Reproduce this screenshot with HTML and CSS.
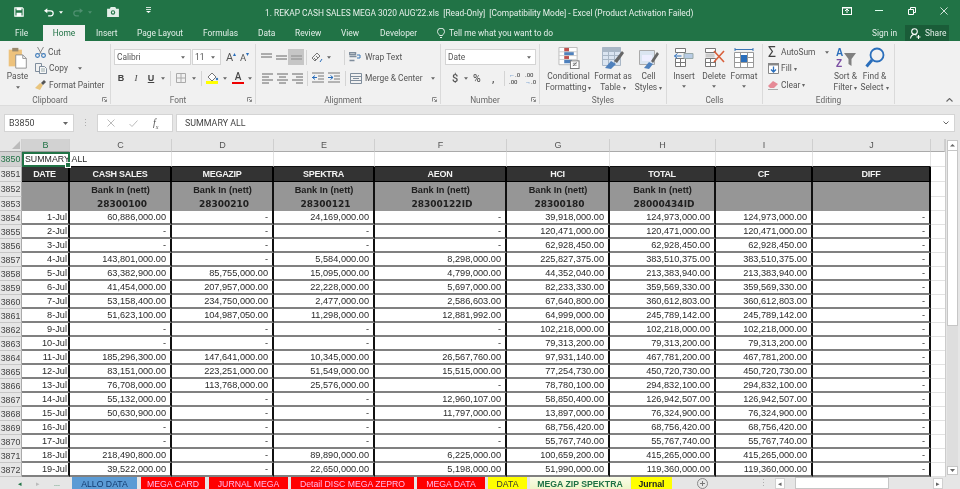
FILE: index.html
```html
<!DOCTYPE html>
<html lang="en">
<head>
<meta charset="utf-8">
<title>Excel</title>
<link rel="stylesheet" href="styles.css">
</head>
<body>
<svg class="defs" width="0" height="0">
  <symbol id="al-left" viewBox="0 0 13 12"><path d="M1 2h11M1 5h7M1 8h11M1 11h7" stroke="#666" fill="none"/></symbol>
  <symbol id="al-center" viewBox="0 0 13 12"><path d="M1 2h11M3 5h7M1 8h11M3 11h7" stroke="#666" fill="none"/></symbol>
  <symbol id="al-right" viewBox="0 0 13 12"><path d="M1 2h11M5 5h7M1 8h11M5 11h7" stroke="#666" fill="none"/></symbol>
  <symbol id="in-dec" viewBox="0 0 12 12"><path d="M0 1h12M6 4h6M6 7h6M0 10h12" stroke="#777" fill="none"/><path d="M0 5.500h5M3 3.500l-2.500 2 2.500 2" stroke="#2a6ebb" fill="none"/></symbol>
  <symbol id="in-inc" viewBox="0 0 12 12"><path d="M0 1h12M6 4h6M6 7h6M0 10h12" stroke="#777" fill="none"/><path d="M0 5.500h5M2.500 3.500l2.500 2-2.500 2" stroke="#2a6ebb" fill="none"/></symbol>
  <symbol id="arrow" viewBox="0 0 5 3"><path d="M0 0h5L2.500 3z" fill="#666"/></symbol>
</svg>
<div class="app">
  <header class="titlebar">
    <div class="qat">
      <svg class="q-save" width="10" height="10" viewBox="0 0 12 12"><path d="M1 1h9l1 1v9H1z" fill="none" stroke="#fff" stroke-width="1.400"/><path d="M3 1h6v3H3zM3 7h6v4H3z" fill="#fff"/></svg>
      <svg class="q-undo" width="10" height="9" viewBox="0 0 12 10"><path d="M3 3h5a3 3 0 0 1 0 6H5" fill="none" stroke="#fff" stroke-width="1.500"/><path d="M0 3l4-3v6z" fill="#fff"/></svg>
      <svg class="q-arrow" width="4" height="3" viewBox="0 0 5 3"><path d="M0 0h5L2.500 3z" fill="#fff"/></svg>
      <svg class="q-redo" width="10" height="9" viewBox="0 0 12 10"><path d="M9 3H4a3 3 0 0 0 0 6h3" fill="none" stroke="#4f9070" stroke-width="1.500"/><path d="M12 3L8 0v6z" fill="#4f9070"/></svg>
      <svg class="q-arrow2" width="4" height="3" viewBox="0 0 5 3"><path d="M0 0h5L2.500 3z" fill="#4f9070"/></svg>
      <svg class="q-camera" width="12" height="10" viewBox="0 0 13 11"><path d="M0 2h3l1-2h5l1 2h3v9H0z" fill="#e4efe9"/><circle cx="6.500" cy="6" r="2.400" fill="#217346"/><circle cx="6.500" cy="6" r="1.200" fill="#e4efe9"/></svg>
      <svg class="q-more" width="5" height="6" viewBox="0 0 5 6"><path d="M0 .5h5M0 2.500h5" stroke="#fff" stroke-width=".8"/><path d="M0 4h5L2.500 6z" fill="#fff"/></svg>
    </div>
    <div class="doc-title">1. REKAP CASH SALES MEGA 3020 AUG'22.xls&nbsp; [Read-Only]&nbsp; [Compatibility Mode] - Excel (Product Activation Failed)</div>
    <div class="win-btns">
      <svg class="w-opt" width="10" height="8" viewBox="0 0 10 8"><rect x=".5" y=".5" width="9" height="7" fill="none" stroke="#fff"/><path d="M5 6V2M3 4l2-2 2 2M0 1h10" stroke="#fff" fill="none"/></svg>
      <svg class="w-min" width="8" height="1"><rect width="8" height="1" fill="#dfe"/></svg>
      <svg class="w-max" width="8" height="8" viewBox="0 0 8 8"><path d="M.5 2.500h5v5h-5zM2.500 2V.5h5v5H6" fill="none" stroke="#fff"/></svg>
      <svg class="w-close" width="8" height="8" viewBox="0 0 9 9"><path d="M.5.5l8 8M8.500.5l-8 8" stroke="#e8f2ec"/></svg>
    </div>
  </header>

  <nav class="tabs">
    <span class="tab t-file">File</span>
    <span class="tab t-home">Home</span>
    <span class="tab t-insert">Insert</span>
    <span class="tab t-page">Page Layout</span>
    <span class="tab t-formulas">Formulas</span>
    <span class="tab t-data">Data</span>
    <span class="tab t-review">Review</span>
    <span class="tab t-view">View</span>
    <span class="tab t-dev">Developer</span>
    <svg class="bulb" width="8" height="11" viewBox="0 0 8 11"><path d="M2.500 7.500C2 6 .5 5.500.5 3.500a3.500 3.300 0 0 1 7 0C7.500 5.500 6 6 5.500 7.500zM3 9.500h2" fill="none" stroke="#e4efe9"/></svg>
    <span class="tab t-tell">Tell me what you want to do</span>
    <span class="tab t-sign">Sign in</span>
    <span class="share">
      <svg width="11" height="11" viewBox="0 0 11 11"><circle cx="4.500" cy="3.500" r="2.800" fill="none" stroke="#fff" stroke-width="1.100"/><path d="M.5 10.500c.5-3 2-4 4-4 1 0 1.500.2 2 .5M8.500 7v4M6.500 9h4" fill="none" stroke="#fff" stroke-width="1.100"/></svg>
      Share
    </span>
  </nav>

  <section class="ribbon">
    <div class="group g-clip">
      <div class="body clip-body">
        <div class="paste">
          <svg width="21" height="22" viewBox="0 0 22 25"><path d="M1 3h15v19H1z" fill="#edc27c"/><path d="M5 1h7v4H5z" fill="#9b8a6e"/><path d="M9 9h8l4 4v11H9z" fill="#fff" stroke="#8b8b8b"/><path d="M17 9v4h4" fill="none" stroke="#8b8b8b"/></svg>
          <span class="paste-label">Paste</span>
          <svg class="paste-arrow" width="4" height="3"><use href="#arrow"/></svg>
        </div>
        <div class="clip-list">
          <div class="clip-row r-cut">
            <svg width="11" height="11" viewBox="0 0 11 11"><path d="M2.500 0l4 7M8.500 0l-4 7" stroke="#8a8a8a" fill="none"/><circle cx="2.500" cy="8.500" r="1.900" fill="none" stroke="#3b79b8" stroke-width="1.100"/><circle cx="8.500" cy="8.500" r="1.900" fill="none" stroke="#3b79b8" stroke-width="1.100"/></svg>
            <span>Cut</span>
          </div>
          <div class="clip-row r-copy">
            <svg width="12" height="11" viewBox="0 0 12 11"><path d="M.5.5h6v8h-6z" fill="#f1f1f1" stroke="#7f8d9c"/><path d="M4.500 3.500h5l2 2v5h-7z" fill="#f7f7f7" stroke="#7f8d9c"/><path d="M6 6h4M6 8h4" stroke="#9aa"/></svg>
            <span>Copy</span>
            <svg class="caret" width="4" height="3"><use href="#arrow"/></svg>
          </div>
          <div class="clip-row r-painter">
            <svg width="12" height="11" viewBox="0 0 12 11"><path d="M0 9l5-5 3 2-3 5z" fill="#e9c57e"/><path d="M6 4l3-3 2 2-3 3z" fill="#555"/></svg>
            <span>Format Painter</span>
          </div>
        </div>
      </div>
      <div class="label lab-pad">Clipboard</div>
      <svg class="launcher" width="5" height="5"><path d="M.5 4.500V.5h4M2 2l2.500 2.500M4.500 2.500v2h-2" fill="none" stroke="#888"/></svg>
    </div>

    <div class="group g-font">
      <div class="body">
        <div class="line l1">
          <div class="select s-font"><span>Calibri</span><svg width="4" height="3"><use href="#arrow"/></svg></div>
          <div class="select s-size"><span>11</span><svg width="4" height="3"><use href="#arrow"/></svg></div>
          <span class="grow">A<sup class="up">▴</sup></span>
          <span class="shrink">A<sup class="dn">▾</sup></span>
        </div>
        <div class="line l2">
          <b class="fmt f-b">B</b>
          <i class="fmt f-i">I</i>
          <span class="fmt f-u">U</span>
          <svg class="c1" width="4" height="3"><use href="#arrow"/></svg>
          <span class="sep s1"></span>
          <svg class="borders" width="10" height="10" viewBox="0 0 10 10"><path d="M.5.5h9v9h-9zM5 .5v9M.5 5h9" fill="none" stroke="#aaa"/></svg>
          <svg class="c2" width="4" height="3"><use href="#arrow"/></svg>
          <span class="sep s2"></span>
          <svg class="fill" width="13" height="12" viewBox="0 0 13 12"><path d="M2 5l4-4 4 4-4 4z" fill="#fff" stroke="#777"/><circle cx="11" cy="7" r="1.200" fill="#3b79b8"/><rect y="9" width="12" height="3" fill="#ff0"/></svg>
          <svg class="c3" width="4" height="3"><use href="#arrow"/></svg>
          <span class="color-a">A</span>
          <svg class="c4" width="4" height="3"><use href="#arrow"/></svg>
        </div>
      </div>
      <div class="label lab-pad">Font</div>
      <svg class="launcher" width="5" height="5"><path d="M.5 4.500V.5h4M2 2l2.500 2.500M4.500 2.500v2h-2" fill="none" stroke="#888"/></svg>
    </div>

    <div class="group g-align">
      <div class="body">
        <div class="line a1">
          <svg width="11" height="8" viewBox="0 0 11 8"><path d="M0 1h11M0 4h11" stroke="#666"/></svg>
          <svg class="gap4" width="11" height="8" viewBox="0 0 11 8"><path d="M0 3h11M0 6h11" stroke="#666"/></svg>
          <span class="sel-mid"><svg width="11" height="5" viewBox="0 0 11 5"><path d="M0 1h11M0 4h11" stroke="#8a8a8a"/></svg></span>
          <span class="sep s3"></span>
          <svg class="orient" width="12" height="11" viewBox="0 0 12 11"><path d="M1 6l5-5 3 3-5 5zM3 6l2 2M5 4l2 2" fill="none" stroke="#777"/><path d="M9 10l2-3" stroke="#2a6ebb"/></svg>
          <svg class="c5" width="4" height="3"><use href="#arrow"/></svg>
          <span class="sep s4"></span>
          <svg class="wrap-ic" width="12" height="11" viewBox="0 0 12 11"><path d="M.5.5h6v2h-6zM.5 4.500h7M.5 8.500h5" fill="none" stroke="#7f8d9c" stroke-width="1.400"/><path d="M8 3h3v3H8" fill="none" stroke="#3b79b8"/></svg>
          <span class="wrap-text">Wrap Text</span>
        </div>
        <div class="line a2">
          <svg width="13" height="12"><use href="#al-left"/></svg>
          <svg class="gap2" width="13" height="12"><use href="#al-center"/></svg>
          <svg class="gap2" width="13" height="12"><use href="#al-right"/></svg>
          <span class="sep s5"></span>
          <svg class="ind1" width="12" height="12"><use href="#in-dec"/></svg>
          <svg class="ind2" width="12" height="12"><use href="#in-inc"/></svg>
          <span class="sep s6"></span>
          <svg class="merge-ic" width="12" height="11" viewBox="0 0 12 11"><path d="M.5.5h11v10H.5zM.5 3.500h11M.5 7.500h11M3 5.500h6" fill="none" stroke="#7f8d9c"/></svg>
          <span class="wrap-text">Merge &amp; Center</span>
          <svg class="c6" width="4" height="3"><use href="#arrow"/></svg>
        </div>
      </div>
      <div class="label lab-pad">Alignment</div>
      <svg class="launcher" width="5" height="5"><path d="M.5 4.500V.5h4M2 2l2.500 2.500M4.500 2.500v2h-2" fill="none" stroke="#888"/></svg>
    </div>

    <div class="group g-num">
      <div class="body">
        <div class="line n1"><div class="select s-num"><span>Date</span><svg width="4" height="3"><use href="#arrow"/></svg></div></div>
        <div class="line n2">
          <span class="sym dollar">$</span>
          <svg class="c7" width="4" height="3"><use href="#arrow"/></svg>
          <span class="sym pct">%</span>
          <span class="sym comma">,</span>
          <span class="sep s7"></span>
          <span class="dec dec1"><em>←</em>.0<br>.00</span>
          <span class="dec dec2">.00<br><em>→</em>.0</span>
        </div>
      </div>
      <div class="label lab-pad">Number</div>
      <svg class="launcher" width="5" height="5"><path d="M.5 4.500V.5h4M2 2l2.500 2.500M4.500 2.500v2h-2" fill="none" stroke="#888"/></svg>
    </div>

    <div class="group g-styles">
      <div class="body big-row">
        <div class="big b-cf">
          <svg width="22" height="22" viewBox="0 0 22 23"><path d="M.5.5h19v18H.5z" fill="#fff" stroke="#bbb"/><path d="M6 1h5v4H6z" fill="#c0504d"/><path d="M6 5h10v4H6z" fill="#4f81bd"/><path d="M6 9h5v4H6z" fill="#c0504d"/><path d="M6 13h8v4H6z" fill="#4f81bd"/><path d="M.5 5h19M.5 9h19M.5 13h19" stroke="#ccc"/><rect x="12.500" y="14.500" width="9" height="8" fill="#fff" stroke="#777"/><path d="M15 20l4-4M15 17h4M15 19h4" stroke="#555" stroke-width=".7"/></svg>
          <span>Conditional</span><span>Formatting <i class="mini">▾</i></span>
        </div>
        <div class="big b-ft">
          <svg width="22" height="22" viewBox="0 0 22 22"><path d="M.5.5h18v18H.5z" fill="#dbe5f1" stroke="#a9b7c6"/><path d="M.5 4.500h18M.5 8.500h18M.5 12.500h18M6.500.5v18M12.500.5v18" stroke="#a9b7c6" fill="none"/><path d="M.5.5h18v4H.5z" fill="#a9b7c6"/><path d="M3 21l6-7 5 3-5 5z" fill="#4f81bd"/><path d="M12 14l8-10 2 2-7 10z" fill="#666"/></svg>
          <span>Format as</span><span>Table <i class="mini">▾</i></span>
        </div>
        <div class="big b-cs">
          <svg width="20" height="22" viewBox="0 0 20 22"><path d="M.5 3.500h15v14H.5z" fill="#dbe5f1" stroke="#aaa"/><path d="M3 8h10v6H3z" fill="#eef"/><path d="M5 21l5-6 4 2-4 5z" fill="#4f81bd"/><path d="M12 14l6-9 2 2-6 9z" fill="#666"/></svg>
          <span>Cell</span><span>Styles <i class="mini">▾</i></span>
        </div>
      </div>
      <div class="label">Styles</div>
    </div>

    <div class="group g-cells">
      <div class="body big-row">
        <div class="big b-cell">
          <svg width="20" height="20" viewBox="0 0 20 20"><path d="M1.500.5h10v4h-10zM1.500 10.500h10v8h-10zM6.500 10.500v8M1.500 14.500h10" fill="#fff" stroke="#777"/><path d="M10 5.500h9v5h-9z" fill="#b8cce4" stroke="#9aa"/><path d="M.5 8h7M.5 8l3-2.500M.5 8l3 2.500" stroke="#2a6ebb" fill="none"/></svg>
          <span>Insert</span><svg class="big-caret" width="4" height="3"><use href="#arrow"/></svg>
        </div>
        <div class="big b-cell">
          <svg width="21" height="20" viewBox="0 0 21 20"><path d="M1.500.5h10v4h-10zM1.500 10.500h10v8h-10zM6.500 10.500v8M1.500 14.500h10" fill="#fff" stroke="#777"/><path d="M1.500 5.500h9v4h-9z" fill="#ccc"/><path d="M10 3l10 11M20 3L10 14" stroke="#d9603b" stroke-width="1.600"/></svg>
          <span>Delete</span><svg class="big-caret" width="4" height="3"><use href="#arrow"/></svg>
        </div>
        <div class="big b-cell">
          <svg width="20" height="20" viewBox="0 0 20 20"><path d="M.5 4.500h19v15H.5zM6.500 4.500v15M13.500 4.500v15M.5 9.500h19M.5 14.500h19" fill="#fff" stroke="#999"/><rect x="7" y="7" width="6" height="7" fill="#2a6ebb"/><path d="M1 1.500h18M1 0v3M19 0v3" stroke="#3a74b4"/></svg>
          <span>Format</span><svg class="big-caret" width="4" height="3"><use href="#arrow"/></svg>
        </div>
      </div>
      <div class="label">Cells</div>
    </div>

    <div class="group g-edit">
      <div class="body big-row">
        <div class="edit-list">
          <div class="clip-row e-sum"><span class="sigma">Σ</span><span>AutoSum</span><svg class="caret-sum" width="4" height="3"><use href="#arrow"/></svg></div>
          <div class="clip-row e-fill"><svg width="11" height="11" viewBox="0 0 11 11"><path d="M.5.5h10v10H.5z" fill="#fff" stroke="#888"/><path d="M0 0h11v2.500H0z" fill="#888"/><path d="M5.500 3.500v5M3 6.500l2.500 2.500L8 6.500" stroke="#2a6ebb" fill="none" stroke-width="1.300"/></svg><span>Fill</span><i class="mini">▾</i></div>
          <div class="clip-row e-clear"><svg width="11" height="10" viewBox="0 0 11 10"><path d="M0 6l5-5 5 3-4 4H2z" fill="#e68a96"/><path d="M0 9.500h10" stroke="#aaa"/></svg><span>Clear</span><i class="mini">▾</i></div>
        </div>
        <div class="big b-sort">
          <svg width="22" height="22" viewBox="0 0 22 22"><text x="1" y="9" class="az-a">A</text><text x="1" y="20" class="az-z">Z</text><path d="M9 6h12l-4.500 6v7l-3-2v-5z" fill="#808080"/></svg>
          <span>Sort &amp;</span><span>Filter <i class="mini">▾</i></span>
        </div>
        <div class="big b-find">
          <svg width="20" height="22" viewBox="0 0 20 22"><circle cx="12" cy="8" r="6.500" fill="none" stroke="#2a6ebb" stroke-width="1.800"/><path d="M7 13l-5.500 6.500" stroke="#2a6ebb" stroke-width="3"/></svg>
          <span>Find &amp;</span><span>Select <i class="mini">▾</i></span>
        </div>
      </div>
      <div class="label">Editing</div>
    </div>

    <div class="collapse">
      <svg width="7" height="4" viewBox="0 0 7 4"><path d="M.5 3.500l3-3 3 3" fill="none" stroke="#666" stroke-width="1.100"/></svg>
    </div>
  </section>

  <section class="formula">
    <div class="namebox"><span>B3850</span><svg width="5" height="3"><use href="#arrow"/></svg></div>
    <span class="dots">⋮</span>
    <div class="fx-box">
      <svg width="8" height="8" viewBox="0 0 8 8"><path d="M.5.5l7 7M7.500.5l-7 7" stroke="#bbb"/></svg>
      <svg class="fx-ok" width="9" height="7" viewBox="0 0 9 7"><path d="M.5 4l2.500 2.500L8.500.5" stroke="#bbb" fill="none"/></svg>
      <i class="fx">f<sub>x</sub></i>
    </div>
    <div class="input"><span>SUMMARY ALL</span><svg width="6" height="4" viewBox="0 0 6 4"><path d="M.5.5l2.500 2.500L5.500.5" fill="none" stroke="#666"/></svg></div>
  </section>

  <main class="sheet">
    <div class="grid-wrap">
      <table class="grid">
        <colgroup>
          <col class="c-rh"><col class="c-b"><col class="c-c"><col class="c-d"><col class="c-e"><col class="c-f"><col class="c-g"><col class="c-h"><col class="c-i"><col class="c-j"><col class="c-k">
        </colgroup>
        <thead>
          <tr class="ch">
            <th class="corner"><svg width="8" height="8" viewBox="0 0 8 8"><path d="M8 0v8H0z" fill="#bbb"/></svg></th>
            <th class="ch-sel">B</th><th>C</th><th>D</th><th>E</th><th>F</th><th>G</th><th>H</th><th>I</th><th>J</th><th></th>
          </tr>
        </thead>
        <tbody>
          <tr class="title-row"><th class="rh-sel">3850</th><td class="active"><span>SUMMARY ALL</span></td><td></td><td></td><td></td><td></td><td></td><td></td><td></td><td></td><td></td></tr>
          <tr class="dark"><th>3851</th><td>DATE</td><td>CASH SALES</td><td>MEGAZIP</td><td>SPEKTRA</td><td>AEON</td><td>HCI</td><td>TOTAL</td><td>CF</td><td>DIFF</td><td class="k"></td></tr>
          <tr class="gray g-bank"><th>3852</th><td></td><td>Bank In (nett)</td><td>Bank In (nett)</td><td>Bank In (nett)</td><td>Bank In (nett)</td><td>Bank In (nett)</td><td>Bank In (nett)</td><td></td><td></td><td class="k"></td></tr>
          <tr class="gray g-code"><th>3853</th><td></td><td>28300100</td><td>28300210</td><td>28300121</td><td>28300122ID</td><td>28300180</td><td>28000434ID</td><td></td><td></td><td class="k"></td></tr>
          <tr><th>3854</th><td>1-Jul</td><td>60,886,000.00</td><td>-</td><td>24,169,000.00</td><td>-</td><td>39,918,000.00</td><td>124,973,000.00</td><td>124,973,000.00</td><td>-</td><td class="k"></td></tr>
          <tr><th>3855</th><td>2-Jul</td><td>-</td><td>-</td><td>-</td><td>-</td><td>120,471,000.00</td><td>120,471,000.00</td><td>120,471,000.00</td><td>-</td><td class="k"></td></tr>
          <tr><th>3856</th><td>3-Jul</td><td>-</td><td>-</td><td>-</td><td>-</td><td>62,928,450.00</td><td>62,928,450.00</td><td>62,928,450.00</td><td>-</td><td class="k"></td></tr>
          <tr><th>3857</th><td>4-Jul</td><td>143,801,000.00</td><td>-</td><td>5,584,000.00</td><td>8,298,000.00</td><td>225,827,375.00</td><td>383,510,375.00</td><td>383,510,375.00</td><td>-</td><td class="k"></td></tr>
          <tr><th>3858</th><td>5-Jul</td><td>63,382,900.00</td><td>85,755,000.00</td><td>15,095,000.00</td><td>4,799,000.00</td><td>44,352,040.00</td><td>213,383,940.00</td><td>213,383,940.00</td><td>-</td><td class="k"></td></tr>
          <tr><th>3859</th><td>6-Jul</td><td>41,454,000.00</td><td>207,957,000.00</td><td>22,228,000.00</td><td>5,697,000.00</td><td>82,233,330.00</td><td>359,569,330.00</td><td>359,569,330.00</td><td>-</td><td class="k"></td></tr>
          <tr><th>3860</th><td>7-Jul</td><td>53,158,400.00</td><td>234,750,000.00</td><td>2,477,000.00</td><td>2,586,603.00</td><td>67,640,800.00</td><td>360,612,803.00</td><td>360,612,803.00</td><td>-</td><td class="k"></td></tr>
          <tr><th>3861</th><td>8-Jul</td><td>51,623,100.00</td><td>104,987,050.00</td><td>11,298,000.00</td><td>12,881,992.00</td><td>64,999,000.00</td><td>245,789,142.00</td><td>245,789,142.00</td><td>-</td><td class="k"></td></tr>
          <tr><th>3862</th><td>9-Jul</td><td>-</td><td>-</td><td>-</td><td>-</td><td>102,218,000.00</td><td>102,218,000.00</td><td>102,218,000.00</td><td>-</td><td class="k"></td></tr>
          <tr><th>3863</th><td>10-Jul</td><td>-</td><td>-</td><td>-</td><td>-</td><td>79,313,200.00</td><td>79,313,200.00</td><td>79,313,200.00</td><td>-</td><td class="k"></td></tr>
          <tr><th>3864</th><td>11-Jul</td><td>185,296,300.00</td><td>147,641,000.00</td><td>10,345,000.00</td><td>26,567,760.00</td><td>97,931,140.00</td><td>467,781,200.00</td><td>467,781,200.00</td><td>-</td><td class="k"></td></tr>
          <tr><th>3865</th><td>12-Jul</td><td>83,151,000.00</td><td>223,251,000.00</td><td>51,549,000.00</td><td>15,515,000.00</td><td>77,254,730.00</td><td>450,720,730.00</td><td>450,720,730.00</td><td>-</td><td class="k"></td></tr>
          <tr><th>3866</th><td>13-Jul</td><td>76,708,000.00</td><td>113,768,000.00</td><td>25,576,000.00</td><td>-</td><td>78,780,100.00</td><td>294,832,100.00</td><td>294,832,100.00</td><td>-</td><td class="k"></td></tr>
          <tr><th>3867</th><td>14-Jul</td><td>55,132,000.00</td><td>-</td><td>-</td><td>12,960,107.00</td><td>58,850,400.00</td><td>126,942,507.00</td><td>126,942,507.00</td><td>-</td><td class="k"></td></tr>
          <tr><th>3868</th><td>15-Jul</td><td>50,630,900.00</td><td>-</td><td>-</td><td>11,797,000.00</td><td>13,897,000.00</td><td>76,324,900.00</td><td>76,324,900.00</td><td>-</td><td class="k"></td></tr>
          <tr><th>3869</th><td>16-Jul</td><td>-</td><td>-</td><td>-</td><td>-</td><td>68,756,420.00</td><td>68,756,420.00</td><td>68,756,420.00</td><td>-</td><td class="k"></td></tr>
          <tr><th>3870</th><td>17-Jul</td><td>-</td><td>-</td><td>-</td><td>-</td><td>55,767,740.00</td><td>55,767,740.00</td><td>55,767,740.00</td><td>-</td><td class="k"></td></tr>
          <tr><th>3871</th><td>18-Jul</td><td>218,490,800.00</td><td>-</td><td>89,890,000.00</td><td>6,225,000.00</td><td>100,659,200.00</td><td>415,265,000.00</td><td>415,265,000.00</td><td>-</td><td class="k"></td></tr>
          <tr><th>3872</th><td>19-Jul</td><td>39,522,000.00</td><td>-</td><td>22,650,000.00</td><td>5,198,000.00</td><td>51,990,000.00</td><td>119,360,000.00</td><td>119,360,000.00</td><td>-</td><td class="k"></td></tr>
        </tbody>
      </table>
    </div>
    <div class="vscroll">
      <svg class="vbtn" width="11" height="11" viewBox="0 0 11 11"><rect x=".5" y=".5" width="10" height="10" fill="#fff" stroke="#c6c6c6"/><path d="M3 6.500h5L5.500 4z" fill="#666"/></svg>
      <span class="vthumb"></span>
      <span class="vspace"></span>
      <svg class="vbtn" width="11" height="9" viewBox="0 0 11 9"><rect x=".5" y=".5" width="10" height="8" fill="#fff" stroke="#c6c6c6"/><path d="M3 3h5L5.500 6z" fill="#666"/></svg>
    </div>
  </main>

  <footer class="sheetbar">
    <div class="nav"><span class="nav-on">◂</span><span class="nav-off">▸</span><span class="nav-on">...</span></div>
    <span class="stab blue">ALLO DATA</span>
    <span class="stab red w-card">MEGA CARD</span>
    <span class="stab red w-jm">JURNAL MEGA</span>
    <span class="stab red w-disc">Detail DISC MEGA ZEPRO</span>
    <span class="stab red w-md">MEGA DATA</span>
    <span class="stab yellow w-data">DATA</span>
    <span class="stab current">MEGA ZIP SPEKTRA</span>
    <span class="stab yellow strong">Jurnal</span>
    <span class="add"><svg width="11" height="11" viewBox="0 0 11 11"><circle cx="5.500" cy="5.500" r="5" fill="none" stroke="#888"/><path d="M5.500 3v5M3 5.500h5" stroke="#777"/></svg></span>
    <span class="bar-dots">⋮</span>
    <div class="hscroll"><span class="hbtn">◂</span><span class="hthumb"></span><span class="hbtn end">▸</span></div>
  </footer>
</div>
</body>
</html>
```
FILE: styles.css
```css
* { box-sizing: border-box; }
html, body { margin: 0; padding: 0; }
body { width: 960px; height: 489px; overflow: hidden; font-family: Roboto, "Liberation Sans", sans-serif; color: #444; background: #e6e6e6; }
.defs { display: block; width: 0; height: 0; }
.app { width: 960px; height: 489px; display: flex; flex-direction: column; overflow: hidden; filter: blur(.3px); }
svg { flex: none; display: block; }

/* title bar */
.titlebar { height: 25px; background: #217346; display: flex; align-items: center; color: #e6f0ea; flex: none; }
.qat { width: 265px; display: flex; align-items: center; flex: none; margin-top: -1px; }
.q-save { margin-left: 14px; }
.q-undo { margin-left: 20px; }
.q-arrow { margin-left: 5px; }
.q-redo { margin-left: 10px; }
.q-arrow2 { margin-left: 5px; }
.q-camera { margin-left: 15px; }
.q-more { margin-left: 27px; margin-top: -4px; }
.doc-title { font-size: 8.400px; white-space: nowrap; width: 428px; flex: none; }
.win-btns { display: flex; align-items: center; margin-left: 149px; margin-top: -4px; }
.w-min { margin-left: 23px; }
.w-max { margin-left: 25px; }
.w-close { margin-left: 24px; }

/* tabs */
.tabs { height: 16px; background: #217346; display: flex; align-items: center; font-size: 8.400px; color: #e2eee8; flex: none; }
.tab { white-space: nowrap; line-height: 16px; display: block; }
.t-file { margin-left: 15px; width: 28px; }
.t-home { width: 42px; height: 16px; background: #f1f1f1; color: #217346; text-align: center; }
.t-insert { margin-left: 11px; width: 41px; }
.t-page { width: 66px; }
.t-formulas { width: 55px; }
.t-data { width: 37px; }
.t-review { width: 46px; }
.t-view { width: 39px; }
.t-dev { width: 57px; }
.bulb { margin-right: 4px; }
.t-tell { width: 423px; }
.t-sign { width: 33px; }
.share { width: 44px; height: 16px; background: #1a5c38; display: flex; align-items: center; gap: 4px; padding-left: 5px; color: #e2eee8; }

/* ribbon */
.ribbon { height: 65px; background: #f1f1f1; display: flex; flex: none; font-size: 8.400px; color: #555; border-bottom: 1px solid #dcdcdc; }
.group { display: flex; flex-direction: column; flex: none; height: 60px; margin-top: 3px; border-right: 1px solid #dadada; position: relative; }
.body { height: 51px; flex: none; }
.label { height: 10px; line-height: 10px; text-align: center; font-size: 8.300px; color: #666; flex: none; }
.lab-pad { padding-right: 10px; }
.launcher { position: absolute; right: 3px; bottom: 2px; }
.g-clip { width: 111px; }
.g-font { width: 145px; }
.g-align { width: 185px; }
.g-num { width: 99px; }
.g-styles { width: 127px; }
.g-cells { width: 96px; }
.g-edit { width: 132px; }
.clip-body { display: flex; }
.paste { width: 35px; display: flex; flex-direction: column; align-items: center; padding-top: 3px; }
.paste-label { margin-top: 2px; line-height: 11px; }
.paste-arrow { margin-top: 4px; }
.clip-list { display: flex; flex-direction: column; margin-top: -1px; padding-top: 1px; }
.clip-row { display: flex; align-items: center; height: 16.300px; gap: 2px; white-space: nowrap; }
.caret { margin-left: 8px; }
.line { display: flex; align-items: center; height: 16px; }
.l1 { margin-top: 5px; padding-left: 3px; }
.l2 { margin-top: 5px; }
.select { background: #fff; border: 1px solid #d4d4d4; height: 16px; display: flex; align-items: center; justify-content: space-between; padding: 0 5px 0 2px; font-size: 8.400px; }
.s-font { width: 77px; }
.s-size { width: 29px; margin-left: 1px; }
.s-num { width: 91px; padding-right: 4px; }
.grow { margin-left: 5px; font-size: 11px; width: 13px; }
.shrink { font-size: 9.500px; width: 11px; margin-left: 1px; }
.up, .dn { font-size: 6px; color: #2a6ebb; vertical-align: 5px; line-height: 0; }
.fmt { font-size: 9px; text-align: center; width: 10px; font-family: "Liberation Serif", serif; color: #444; }
.f-b { margin-left: 5px; font-family: "Liberation Sans", sans-serif; }
.f-i { margin-left: 5px; }
.f-u { margin-left: 5px; text-decoration: underline; font-weight: 700; font-family: "Liberation Sans", sans-serif; }
.c1 { margin-left: 5px; }
.sep { width: 1px; height: 15px; background: #d4d4d4; flex: none; display: block; }
.s1 { margin-left: 5px; }
.borders { margin-left: 5px; }
.c2 { margin-left: 6px; }
.s2 { margin-left: 5px; }
.fill { margin-left: 4px; }
.c3 { margin-left: 4px; }
.color-a { margin-left: 5px; width: 12px; font-size: 10px; font-weight: 500; text-align: center; line-height: 10px; color: #444; border-bottom: 2px solid #e00; height: 12px; }
.c4 { margin-left: 4px; }
.a1 { margin-top: 5px; padding-left: 5px; }
.gap4 { margin-left: 4px; }
.sel-mid { width: 16px; height: 16px; background: #c6c6c6; display: flex; align-items: center; justify-content: center; margin-left: 1px; }
.s3 { margin-left: 2px; }
.orient { margin-left: 4px; }
.c5 { margin-left: 4px; }
.s4 { margin-left: 13px; }
.wrap-ic, .merge-ic { margin-left: 4px; }
.wrap-text { margin-left: 3px; white-space: nowrap; }
.a1 .wrap-text { margin-left: 4px; }
.a2 { margin-top: 5px; padding-left: 5px; }
.gap2 { margin-left: 2px; }
.s5 { margin-left: 3px; }
.ind1 { margin-left: 4px; }
.ind2 { margin-left: 4px; }
.s6 { margin-left: 5px; }
.c6 { margin-left: 8px; }
.n1 { margin-top: 5px; padding-left: 4px; }
.n2 { margin-top: 5px; }
.sym { font-size: 11px; font-weight: 500; color: #555; }
.dollar { margin-left: 11px; width: 8px; }
.c7 { margin-left: 4px; }
.pct { margin-left: 5px; width: 12px; font-size: 10.500px; }
.comma { margin-left: 7px; width: 5px; }
.s7 { margin-left: 7px; }
.dec { font-size: 6px; line-height: 7px; font-weight: 500; color: #555; width: 14px; display: block; white-space: nowrap; }
.dec em { font-style: normal; color: #2a6ebb; }
.dec1 { margin-left: 4px; }
.dec2 { margin-left: 2px; }
.big-row { display: flex; }
.big { display: flex; flex-direction: column; align-items: center; line-height: 11px; white-space: nowrap; padding-top: 3px; flex: none; }
.big svg:first-child { height: 22px; margin-bottom: 2px; }
.mini { font-style: normal; font-size: 6px; color: #666; }
.b-cf { width: 55px; margin-left: 1px; }
.b-ft { width: 34px; }
.b-cs { width: 37px; }
.b-cell { width: 30px; }
.g-cells .big-row { padding-left: 2px; }
.big-caret { margin-top: 3px; }
.edit-list { display: flex; flex-direction: column; width: 68px; padding-left: 5px; margin-top: -1px; padding-top: 1px; flex: none; }
.sigma { font-size: 14px; line-height: 12px; color: #444; width: 11px; }
.caret-sum { margin-left: 8px; }
.b-sort { width: 29px; }
.b-find { width: 29px; }
.az-a { font: 700 10px "Liberation Sans", sans-serif; fill: #2a6ebb; }
.az-z { font: 700 10px "Liberation Sans", sans-serif; fill: #7b4ea3; }
.collapse { flex: 1; display: flex; justify-content: flex-end; align-items: flex-end; padding: 0 7px 3px 0; }

/* formula bar */
.formula { height: 33px; flex: none; background: #e6e6e6; display: flex; align-items: center; padding: 8px 4px 7px; }
.namebox { width: 70px; height: 18px; background: #fff; border: 1px solid #d4d4d4; display: flex; justify-content: space-between; align-items: center; padding: 0 5px 0 4px; font-size: 8.900px; flex: none; }
.dots { width: 23px; text-align: center; color: #aaa; font-size: 9px; flex: none; }
.fx-box { width: 76px; height: 18px; background: #fff; border: 1px solid #d4d4d4; display: flex; align-items: center; padding-left: 9px; flex: none; }
.fx-ok { margin-left: 14px; }
.fx { font-family: "Liberation Serif", serif; font-size: 10px; margin-left: 15px; color: #555; }
.fx sub { font-size: 6px; }
.input { margin-left: 3px; width: 779px; height: 18px; background: #fff; border: 1px solid #d4d4d4; display: flex; align-items: center; justify-content: space-between; padding: 0 5px 0 8px; font-size: 8.900px; flex: none; }

/* grid */
.sheet { height: 338px; flex: none; display: flex; background: #e6e6e6; overflow: hidden; }
.grid-wrap { width: 947px; flex: none; overflow: hidden; }
.grid { border-collapse: separate; border-spacing: 0; table-layout: fixed; width: 945px; font-family: "Liberation Sans", sans-serif; font-size: 9.200px; color: #2a2a2a; background: #fff; border-right: 1px solid #ccc; }
.c-rh { width: 22px; } .c-b { width: 48px; } .c-c { width: 102px; } .c-d { width: 102px; } .c-e { width: 101px; } .c-f { width: 132px; } .c-g { width: 103px; } .c-h { width: 106px; } .c-i { width: 97px; } .c-j { width: 118px; } .c-k { width: 14px; }
.grid th, .grid td { padding: 0; height: 14px; line-height: 12px; white-space: nowrap; font-weight: 400; overflow: visible; }
.grid .ch th { height: 13px; background: #e6e6e6; color: #555; border-right: 1px solid #cfcfcf; border-bottom: 1px solid #aaa; text-align: center; font-size: 9px; }
.grid .ch .corner { padding-left: 12px; }
.grid .ch .ch-sel { background: #d2d2d2; color: #217346; border-bottom: 1px solid #999; }
.grid tbody th { background: #e6e6e6; border-right: 1px solid #aaa; border-bottom: 1px solid #c6c6c6; color: #444; text-align: center; font-size: 8.900px; }
.grid tbody .rh-sel { color: #217346; background: #d2d2d2; }
.grid tbody td { text-align: right; padding-right: 4px; border-right: 2px solid #111; border-bottom: 2px solid #808080; }
.grid tbody td:nth-child(2) { padding-right: 1px; }
.grid tbody td.k { border-right: 0; border-bottom: 1px solid #e2e2e2; padding: 0; }
.grid .title-row th, .grid .title-row td { height: 15px; }
.grid .title-row td { border-right: 1px solid #e2e2e2; border-bottom: 1px solid #111; text-align: left; font-size: 8.800px; }
.grid .title-row td:last-child { border-right: 0; border-bottom: 1px solid #e2e2e2; }
.grid .title-row .active { position: relative; outline: 2px solid #217346; outline-offset: -2px; padding-left: 3px; padding-right: 0; }
.active::after { content: ""; position: absolute; right: -2px; bottom: -2px; width: 4px; height: 4px; background: #217346; border: 1px solid #fff; }
.grid .dark th, .grid .dark td { height: 15px; }
.grid .dark td { background: #333; color: #f2f2f2; font-weight: 700; font-size: 9px; letter-spacing: -.3px; text-align: center; padding-right: 0; border-right-color: #000; border-bottom: 1px solid #000; }
.grid .gray td { background: #969696; color: #202020; font-weight: 700; text-align: center; padding-right: 0; border-bottom: 0; }
.grid .g-bank th, .grid .g-bank td { height: 15px; }
.grid .g-bank td { font-size: 9.200px; padding-left: 1px; }
.grid .g-code td { font-family: "DejaVu Sans", sans-serif; font-size: 9px; padding-left: 4px; }
.grid .gray td.k, .grid .dark td.k { background: #fff; border-bottom: 1px solid #e2e2e2; padding: 0; }

.vscroll { width: 13px; flex: none; display: flex; flex-direction: column; padding: 1px 2px 2px 0; }
.vthumb { height: 175px; background: #fff; border: 1px solid #c6c6c6; border-top: 0; display: block; flex: none; }
.vspace { flex: 1; background: #dedede; display: block; }

/* sheet tabs */
.sheetbar { height: 12px; flex: none; display: flex; background: #e6e6e6; font-family: "Liberation Sans", sans-serif; font-size: 8.700px; white-space: nowrap; overflow: hidden; }
.nav { width: 72px; display: flex; font-size: 7px; line-height: 14px; padding-left: 18px; flex: none; color: #217346; }
.nav span { width: 20px; display: block; }
.nav-off { color: #bbb; }
.stab { display: block; height: 12px; line-height: 14px; text-align: center; flex: none; margin-right: 3px; }
.blue { width: 65px; background: #5b9bd5; color: #123a6e; margin-right: 4px; }
.red { background: #f00; color: #fbe; }
.w-card { width: 64px; margin-right: 4px; }
.w-jm { width: 79px; }
.w-disc { width: 123px; }
.w-md { width: 68px; }
.yellow { background: #ff0; color: #333; }
.w-data { width: 39px; }
.current { width: 100px; margin-right: 1px; background: linear-gradient(#fbfde8, #eef5c8); color: #1e7145; font-weight: 700; }
.strong { width: 41px; font-weight: 700; color: #222; margin-right: 0; }
.add { width: 58px; display: flex; justify-content: center; padding-left: 2px; align-items: center; flex: none; }
.bar-dots { width: 14px; margin-left: 26px; color: #aaa; text-align: center; font-size: 9px; line-height: 13px; flex: none; }
.hscroll { flex: 1; display: flex; align-items: center; font-size: 7px; color: #666; height: 12px; margin-left: 5px; }
.hbtn { width: 10px; height: 11px; background: #fff; border: 1px solid #d0d0d0; line-height: 10px; text-align: center; display: block; flex: none; }
.hthumb { width: 94px; height: 12px; background: #fff; border: 1px solid #c6c6c6; margin-left: 10px; display: block; flex: none; }
.hbtn.end { margin-left: 44px; }
```
